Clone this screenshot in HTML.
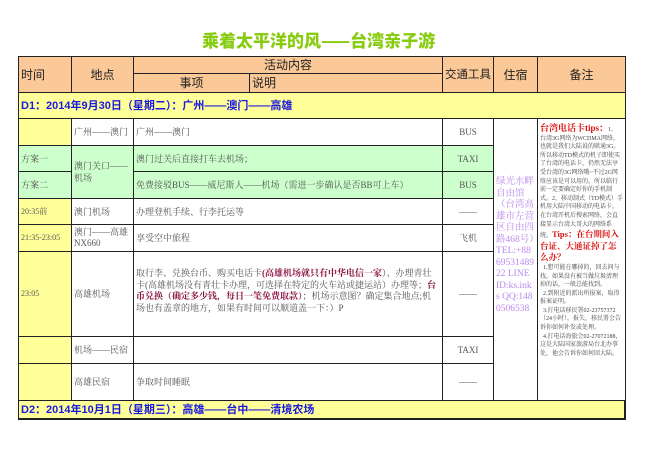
<!DOCTYPE html>
<html><head><meta charset="utf-8"><style>
body{margin:0;width:649px;height:459px;background:#fff;position:relative;overflow:hidden;font-family:"Liberation Serif","Noto Serif CJK SC",serif;}
.c{position:absolute;box-sizing:border-box;border:1px solid #222;font-size:9px;color:#555;padding:2px 2px;line-height:12px;overflow:hidden;display:flex;align-items:center}
.h{background:#fbc997;color:#222;font-family:"Liberation Sans","Noto Sans CJK SC",sans-serif;font-size:12px;justify-content:center}
.y{background:#ffff99}.g{background:#ccffcc}.w{background:#fff}
.ct{justify-content:center}
.d{background:#ffff99;color:#1a1adf;font-weight:bold;font-family:"Liberation Sans","Noto Sans CJK SC",sans-serif;font-size:11px}
.r{color:#8a1545;font-weight:bold}
</style></head><body>
<div style="position:absolute;left:202px;top:27px;font-family:'Noto Sans CJK SC',sans-serif;font-weight:900;font-size:17px;color:#88cc11;letter-spacing:0px">乘着太平洋的风——台湾亲子游</div>
<div class="c h" style="left:18px;top:56px;width:54px;height:37px;justify-content:flex-start">时间</div>
<div class="c h" style="left:71px;top:56px;width:63px;height:37px">地点</div>
<div class="c h" style="left:133px;top:56px;width:310px;height:18px">活动内容</div>
<div class="c h" style="left:133px;top:73px;width:117px;height:20px">事项</div>
<div class="c h" style="left:249px;top:73px;width:194px;height:20px;justify-content:flex-start">说明</div>
<div class="c h" style="left:442px;top:56px;width:52px;height:37px;padding:0;font-size:11.5px;white-space:nowrap">交通工具</div>
<div class="c h" style="left:493px;top:56px;width:45px;height:37px">住宿</div>
<div class="c h" style="left:537px;top:56px;width:89px;height:37px">备注</div>
<div class="c d" style="left:18px;top:92px;width:608px;height:27px">D1：2014年9月30日（星期二）：广州——澳门——高雄</div>

<div class="c y" style="left:18px;top:118px;width:54px;height:28px"></div>
<div class="c w" style="left:71px;top:118px;width:63px;height:28px">广州——澳门</div>
<div class="c w" style="left:133px;top:118px;width:310px;height:28px">广州——澳门</div>
<div class="c w ct" style="left:442px;top:118px;width:52px;height:28px">BUS</div>

<div class="c g" style="left:18px;top:145px;width:54px;height:27px">方案一</div>
<div class="c g" style="left:71px;top:145px;width:63px;height:54px">澳门关口——机场</div>
<div class="c g" style="left:133px;top:145px;width:310px;height:27px">澳门过关后直接打车去机场；</div>
<div class="c g ct" style="left:442px;top:145px;width:52px;height:27px">TAXI</div>
<div class="c g" style="left:18px;top:171px;width:54px;height:28px">方案二</div>
<div class="c g" style="left:133px;top:171px;width:310px;height:28px">免费接驳BUS——威尼斯人——机场（需进一步确认是否BB可上车）</div>
<div class="c g ct" style="left:442px;top:171px;width:52px;height:28px">BUS</div>

<div class="c y" style="left:18px;top:198px;width:54px;height:27px;font-size:8px">20:35前</div>
<div class="c w" style="left:71px;top:198px;width:63px;height:27px">澳门机场</div>
<div class="c w" style="left:133px;top:198px;width:310px;height:27px">办理登机手续、行李托运等</div>
<div class="c w ct" style="left:442px;top:198px;width:52px;height:27px">——</div>

<div class="c y" style="left:18px;top:224px;width:54px;height:28px;font-size:8px">21:35-23:05</div>
<div class="c w" style="left:71px;top:224px;width:63px;height:28px;line-height:11px">澳门——高雄NX660</div>
<div class="c w" style="left:133px;top:224px;width:310px;height:28px">享受空中旅程</div>
<div class="c w ct" style="left:442px;top:224px;width:52px;height:28px">飞机</div>

<div class="c y" style="left:18px;top:251px;width:54px;height:86px;font-size:8px">23:05</div>
<div class="c w" style="left:71px;top:251px;width:63px;height:86px">高雄机场</div>
<div class="c w" style="left:133px;top:251px;width:310px;height:86px;display:block;padding-top:16px;line-height:11.5px">取行李、兑换台币、购买电话卡<span class="r">(高雄机场就只有中华电信一家</span>）、办理青壮卡(高雄机场没有青壮卡办理，可选择在特定的火车站或捷运站）办理等；<span class="r">台币兑换（确定多少钱，每日一笔免费取款）</span>；机场示意图？确定集合地点;机场也有盖章的地方，如果有时间可以顺道盖一下：）P</div>
<div class="c w ct" style="left:442px;top:251px;width:52px;height:86px">——</div>

<div class="c y" style="left:18px;top:336px;width:54px;height:28px"></div>
<div class="c w" style="left:71px;top:336px;width:63px;height:28px">机场——民宿</div>
<div class="c w" style="left:133px;top:336px;width:310px;height:28px"></div>
<div class="c w ct" style="left:442px;top:336px;width:52px;height:28px">TAXI</div>

<div class="c y" style="left:18px;top:363px;width:54px;height:38px"></div>
<div class="c w" style="left:71px;top:363px;width:63px;height:38px">高雄民宿</div>
<div class="c w" style="left:133px;top:363px;width:310px;height:38px">争取时间睡眠</div>
<div class="c w ct" style="left:442px;top:363px;width:52px;height:38px">——</div>

<div class="c w" style="left:493px;top:118px;width:45px;height:283px;color:#bb88ee;font-size:9.5px;line-height:11.5px;display:block;padding-top:58px;word-break:break-all">绿光水畔自由馆（台湾高雄市左营区自由四路468号）TEL:+886953148922 LINE ID:ks.inks QQ:1480506538</div>
<div class="c w" style="left:537px;top:118px;width:89px;height:283px;font-size:6px;line-height:8.6px;display:block;padding-top:5px;color:#444"><span style="color:#dd1111;font-weight:bold;font-size:9px">台湾电话卡tips：</span>1、台湾3G网络为WCDMA网络，也就是我们大陆说的联通3G。所以移动TD模式的机子即使买了台湾的电话卡，仍然无法享受台湾的3G网络哦~不过2G网络应该是可以用的。所以临行前一定要确定好你的手机制式。2、移动制式（TD模式）手机用大陆中国移动的电话卡，在台湾开机后搜索网络，会直接显示台湾大哥大的网络系统。<span style="color:#dd1111;font-weight:bold;font-size:8.5px;line-height:10px">Tips：在台期间入台证、大通证掉了怎么办？</span><br>&nbsp;&nbsp;1.想可能在哪掉的，回去问与找，如果没有被当做垃圾清理掉的话，一般总能找到。<br>&nbsp;&nbsp;2.到附近的派出所报案，取得报案证明。<br>&nbsp;&nbsp;3.打电话移民署02-23757372（24小时），报失，移民署会告诉你如何补发或处理。<br>&nbsp;&nbsp;4.打电话海旅会02-27072188，这是大陆国家旅游局台北办事处，他会告诉你如何回大陆。</div>

<div class="c d" style="left:18px;top:400px;width:608px;height:20px;border-width:1px 2px 2px 1px">D2：2014年10月1日（星期三）：高雄——台中——清境农场</div>
</body></html>
